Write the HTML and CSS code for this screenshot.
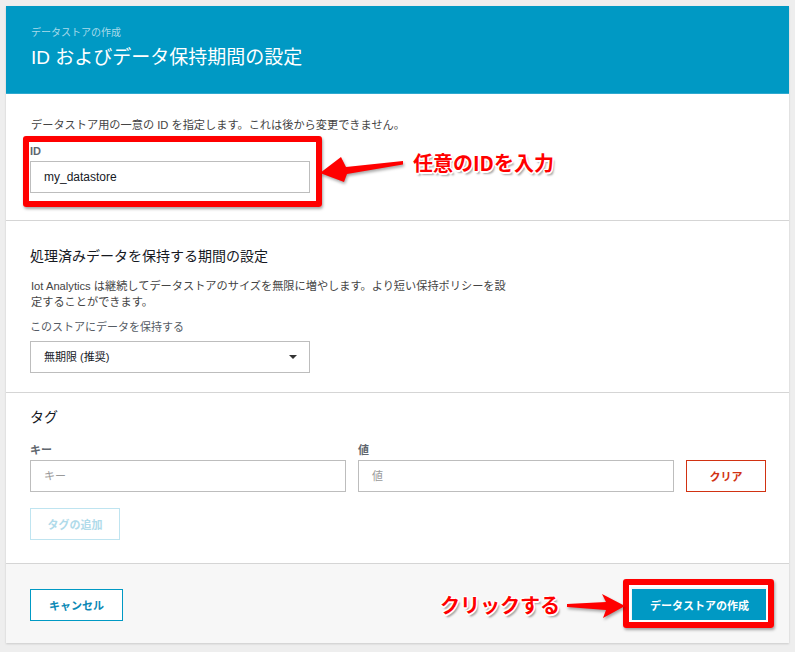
FILE: index.html
```html
<!DOCTYPE html>
<html lang="ja">
<head>
<meta charset="utf-8">
<title>ID およびデータ保持期間の設定</title>
<link rel="stylesheet" href="styles.css">
</head>
<body>
<div class="page">
  <div class="panel">
    <header class="hero">
      <div class="crumb">データストアの作成</div>
      <h1 class="title">ID およびデータ保持期間の設定</h1>
    </header>

    <section class="sec sec-id">
      <p class="desc">データストア用の一意の ID を指定します。これは後から変更できません。</p>
      <div class="lbl lbl-b">ID</div>
      <div class="field w280">my_datastore</div>
    </section>

    <section class="sec sec-ret">
      <h2 class="h2">処理済みデータを保持する期間の設定</h2>
      <p class="desc">Iot Analytics は継続してデータストアのサイズを無限に増やします。より短い保持ポリシーを設定することができます。</p>
      <div class="lbl">このストアにデータを保持する</div>
      <div class="field select w280"><span>無期限 (推奨)</span><span class="caret"></span></div>
    </section>

    <section class="sec sec-tag">
      <h2 class="h2">タグ</h2>
      <div class="tag-grid">
        <div class="lbl lbl-b">キー</div>
        <div class="lbl lbl-b">値</div>
        <div></div>
        <div class="field ph">キー</div>
        <div class="field ph">値</div>
        <button class="btn btn-clear">クリア</button>
      </div>
      <button class="btn btn-add">タグの追加</button>
    </section>

    <footer class="foot">
      <button class="btn btn-cancel">キャンセル</button>
      <button class="btn btn-create">データストアの作成</button>
    </footer>
  </div>

  <div class="mark mark-id"></div>
  <div class="mark mark-create"></div>
  <svg class="arrows" viewBox="0 0 795 652" width="795" height="652">
    <polygon points="320,173 341,157 346,167 403,161 403,164.5 347,174 344,182"/>
    <polygon points="625,606 602,594 606,602 567,604 567,607 606,610 603,618"/>
  </svg>
  <div class="note note-id">任意のIDを入力</div>
  <div class="note note-click">クリックする</div>
</div>
</body>
</html>
```

FILE: styles.css
```css
html, body {
  margin: 0;
  padding: 0;
}
body {
  background: #eeeeee;
  font-family: "Liberation Sans", "Noto Sans CJK JP", sans-serif;
  color: #444;
}
.page {
  position: relative;
  padding: 6px 6px 9px;
}
.panel {
  background: #fff;
  box-shadow: 0 1px 2px rgba(0, 0, 0, 0.15);
}
.hero {
  box-sizing: border-box;
  height: 88px;
  background: #0099c4;
  padding: 20px 25px 0;
  border-bottom: 1px solid #2fa9cf;
}
.crumb {
  font-size: 10px;
  line-height: 14px;
  color: #a8dbeb;
}
.title {
  margin: 5px 0 0;
  font-size: 19px;
  line-height: 26px;
  font-weight: 400;
  color: #fff;
}
.sec {
  padding-left: 24px;
  padding-right: 23px;
  border-bottom: 1px solid #d5d5d5;
}
.sec-id {
  padding-top: 23px;
  padding-bottom: 27px;
}
.desc {
  margin: 0;
  padding-left: 1px;
  font-size: 11.2px;
  line-height: 16px;
  color: #444;
}
.lbl {
  font-size: 11px;
  line-height: 14px;
  color: #545b64;
}
.lbl-b {
  font-weight: bold;
  color: #60666e;
}
.sec-id .lbl {
  margin-top: 11px;
}
.field {
  box-sizing: border-box;
  height: 32px;
  border: 1px solid #bdbdbd;
  background: #fff;
  padding: 0 13px;
  font-size: 12px;
  line-height: 30px;
  color: #16191f;
}
.w280 {
  width: 280px;
}
.sec-id .field {
  margin-top: 3px;
}
.sec-ret {
  padding-top: 25px;
  padding-bottom: 19px;
}
.h2 {
  margin: 0;
  font-size: 14px;
  line-height: 20px;
  font-weight: 400;
  color: #16191f;
}
.sec-ret .desc {
  margin-top: 12px;
  max-width: 480px;
}
.sec-ret .lbl {
  margin-top: 10px;
}
.select {
  margin-top: 7px;
  display: flex;
  align-items: center;
  justify-content: space-between;
  font-size: 11px;
  padding-right: 12px;
}
.caret {
  width: 0;
  height: 0;
  border-left: 4px solid transparent;
  border-right: 4px solid transparent;
  border-top: 4px solid #333;
}
.sec-tag {
  padding-top: 14px;
  padding-bottom: 23px;
}
.tag-grid {
  margin-top: 16px;
  display: grid;
  grid-template-columns: 316px 316px 80px;
  column-gap: 12px;
  row-gap: 3px;
}
.ph {
  font-size: 11px;
  color: #9a9a9a;
}
.btn {
  box-sizing: border-box;
  height: 32px;
  padding: 0;
  margin: 0;
  background: #fff;
  font-family: "Liberation Sans", "Noto Sans CJK JP", sans-serif;
  font-size: 11px;
  font-weight: bold;
  cursor: pointer;
}
.btn-clear {
  border: 1px solid #d13212;
  color: #d13212;
}
.btn-add {
  display: block;
  margin-top: 16px;
  width: 90px;
  border: 1px solid #bfe4f0;
  color: #b0dbea;
}
.foot {
  background: #f7f7f7;
  padding: 25px 22px 22px 24px;
  display: flex;
  justify-content: space-between;
}
.btn-cancel {
  width: 93px;
  border: 1px solid #0099c4;
  color: #0a88b5;
}
.btn-create {
  width: 135px;
  border: 1px solid #0099c4;
  background: #0099c4;
  color: #fff;
}

/* annotation overlay */
.mark {
  position: absolute;
  border: 6px solid #ff0000;
  border-radius: 3px;
  box-shadow: 1px 2px 3px rgba(0, 0, 0, 0.35);
}
.mark-id {
  left: 23px;
  top: 136px;
  width: 287px;
  height: 59px;
}
.mark-create {
  left: 623px;
  top: 579px;
  width: 139px;
  height: 37px;
  box-shadow: inset 0 0 0 2px #fff, 1px 2px 3px rgba(0, 0, 0, 0.35);
}
.arrows {
  position: absolute;
  left: 0;
  top: 0;
  pointer-events: none;
  fill: #ff0000;
  filter: drop-shadow(1px 2px 1.5px rgba(0, 0, 0, 0.35));
}
.note {
  position: absolute;
  white-space: nowrap;
  font-family: "Noto Sans CJK JP", sans-serif;
  font-size: 20px;
  line-height: 24px;
  font-weight: bold;
  color: #ff0000;
  text-shadow:
    -1.5px 0 0 #fff, 1.5px 0 0 #fff, 0 -1.5px 0 #fff, 0 1.5px 0 #fff,
    -1px -1px 0 #fff, 1px -1px 0 #fff, -1px 1px 0 #fff, 1px 1px 0 #fff,
    2px 3px 2px rgba(0, 0, 0, 0.35);
}
.note-id {
  left: 413px;
  top: 151px;
}
.note-click {
  left: 440px;
  top: 593px;
}
```
